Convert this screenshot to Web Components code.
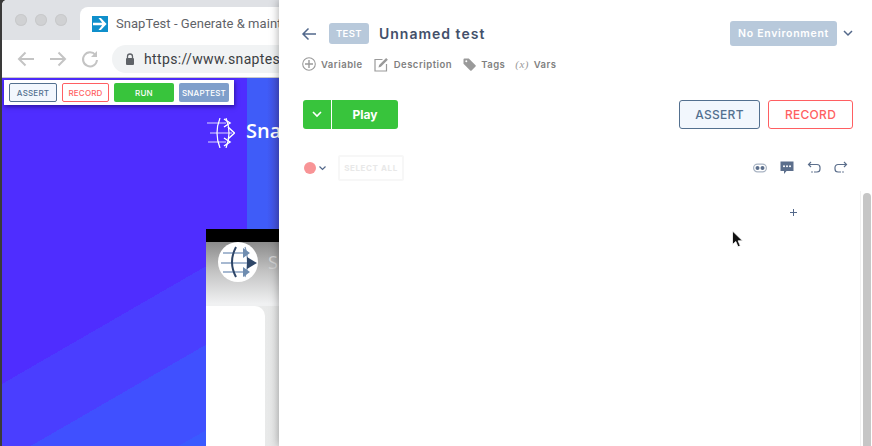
<!DOCTYPE html>
<html>
<head>
<meta charset="utf-8">
<title>SnapTest</title>
<style>
  html, body { margin: 0; height: 100%; overflow: hidden; background: #3a3a3a; }
  body { font-family: Inter, "Liberation Sans", sans-serif; }
</style>
</head>
<body>
<snap-app>
  <browser-window slot="left"></browser-window>
  <test-panel slot="right"></test-panel>
</snap-app>

<script>
function component(name, html) {
  const template = document.createElement('template');
  template.innerHTML = html;
  customElements.define(name, class extends HTMLElement {
    constructor() {
      super();
      this.attachShadow({ mode: 'open' });
      this.shadowRoot.appendChild(template.content.cloneNode(true));
    }
  });
}

component('snap-app', `
  <style>
    :host { display: flex; width: 872px; height: 446px; overflow: hidden; }
    .left { display: block; width: 279px; height: 100%; flex: none; padding-left: 2px; box-sizing: border-box; }
    .right { display: block; flex: 1; height: 100%; position: relative; z-index: 2; box-shadow: 0 0 9px rgba(0,0,0,.35); }
  </style>
  <div class="left"><slot name="left"></slot></div>
  <div class="right"><slot name="right"></slot></div>
`);

component('browser-window', `
  <style>
    :host { display: flex; flex-direction: column; height: 100%; overflow: hidden; border-top-left-radius: 5px; background: #fff; }
    site-page { flex: 1; min-height: 0; }
  </style>
  <browser-tabs></browser-tabs>
  <browser-bar></browser-bar>
  <site-page></site-page>
`);

component('browser-tabs', `
  <style>
    :host { display: flex; align-items: flex-end; height: 40px; background: #dfe1e5; padding-left: 13px; box-sizing: border-box; }
    .lights { display: flex; gap: 8px; align-self: center; margin-right: 13px; }
    .lights i { width: 12px; height: 12px; border-radius: 50%; background: #d0d1d3; box-shadow: inset 0 0 0 1px #c8c9cb; }
    .tab { flex: 1; height: 33px; background: #fff; border-radius: 8px 0 0 0; display: flex; align-items: center; padding-left: 12px; gap: 8px; white-space: nowrap; overflow: hidden; }
    .tab svg { flex: none; }
    .tab span { font: 13px Roboto, "Liberation Sans", sans-serif; letter-spacing: .05px; color: #5f6368; }
  </style>
  <div class="lights"><i></i><i></i><i></i></div>
  <div class="tab">
    <svg width="16" height="16" viewBox="0 0 16 16"><rect width="16" height="16" fill="#0f8fcb"/><path d="M1 6.800h9.200L6.500 2h2.400l5.700 6-5.700 6H6.500l3.700-4.800H1z" fill="#fff"/></svg>
    <span>SnapTest - Generate &amp; maint</span>
  </div>
`);

component('browser-bar', `
  <style>
    :host { display: flex; align-items: center; height: 38px; background: #fff; border-bottom: 1px solid #c9c9c9; box-sizing: border-box; padding-left: 14px; overflow: hidden; }
    svg.nav { flex: none; margin-right: 12px; }
    .url { flex: none; width: 260px; height: 28px; border-radius: 14px; background: #f1f3f4; display: flex; align-items: center; padding-left: 13px; margin-left: 2px; box-sizing: border-box; gap: 9px; }
    .url span { font: 14px Roboto, "Liberation Sans", sans-serif; letter-spacing: .35px; color: #3c4043; white-space: nowrap; }
  </style>
  <svg class="nav" width="20" height="20" viewBox="0 0 20 20" fill="none" stroke="#c4c4c4" stroke-width="2"><path d="M18 10H3M9.500 3.500 3 10l6.500 6.500"/></svg>
  <svg class="nav" width="20" height="20" viewBox="0 0 20 20" fill="none" stroke="#c4c4c4" stroke-width="2"><path d="M2 10h15M10.500 3.500 17 10l-6.500 6.500"/></svg>
  <svg class="nav" style="margin-right:10px" width="20" height="20" viewBox="0 0 20 20" fill="none"><path d="M15.500 6A7 7 0 1 0 17 11" stroke="#c4c4c4" stroke-width="2"/><path d="M17 2v6h-6z" fill="#c4c4c4"/></svg>
  <div class="url">
    <svg width="10" height="12" viewBox="0 0 10 12"><path d="M2.500 5V3.500a2.500 2.500 0 0 1 5 0V5" fill="none" stroke="#5f6368" stroke-width="1.300"/><rect x="1" y="5" width="8" height="7" rx="1" fill="#5f6368"/></svg>
    <span>https://www.snaptes</span>
  </div>
`);

component('site-page', `
  <style>
    :host {
      display: flex; flex-direction: column; position: relative; overflow: hidden;
      padding-left: 204px; box-sizing: border-box;
      background:
        linear-gradient(90deg, #3f5cf8 0, #3f5cf8 20px, #4650d8 32px) right top / 32px 151px no-repeat,
        linear-gradient(150deg, #4f2dff 0, #4f2dff 265px, #4a3eff 265px, #4a3eff 333px, #4050ff 333px, #4050ff 407px, #3a5aff 407px);
    }
    snap-toolbar { position: absolute; left: 2px; top: 2px; }
    site-brand { height: 151px; flex: none; }
    video-card { flex: 1; min-height: 0; }
  </style>
  <snap-toolbar></snap-toolbar>
  <site-brand></site-brand>
  <video-card></video-card>
`);

component('snap-toolbar', `
  <style>
    :host { display: flex; gap: 5px; background: #fff; padding: 3px 5px; width: 230px; height: 25px; box-sizing: border-box; box-shadow: 1px 2px 4px rgba(20,0,90,.55); }
    button { height: 19px; margin: 0; padding: 0; border-radius: 2px; box-sizing: border-box; font: 500 8px Inter, "Liberation Sans", sans-serif; letter-spacing: .2px; }
    .assert { width: 48px; background: #f2f7fd; border: 1px solid #53708f; color: #53708f; }
    .record { width: 47px; background: #fff; border: 1px solid #ff5f62; color: #ff5f62; }
    .run { width: 60px; background: #38c43c; border: 0; color: #fff; }
    .snap { width: 50px; background: #7f9fcb; border: 0; color: #fff; }
  </style>
  <button class="assert">ASSERT</button>
  <button class="record">RECORD</button>
  <button class="run">RUN</button>
  <button class="snap">SNAPTEST</button>
`);

component('site-brand', `
  <style>
    :host { display: flex; align-items: flex-start; padding-top: 40px; padding-left: 1px; box-sizing: border-box; white-space: nowrap; }
    svg { flex: none; width: 28px; height: 30px; }
    span { font: 600 20px "Open Sans", "Liberation Sans", sans-serif; color: #fff; margin-left: 11px; line-height: 26px; }
  </style>
  <svg viewBox="0 0 28 30" fill="none" stroke="#fff">
    <path d="M0 5h19M3 15h22M1 24h18" stroke-width="1.100" stroke-opacity=".8"/>
    <path d="M13 0Q7 15 13 30M19 0Q25 15 19 30" stroke-width="1.200"/>
    <path d="M17 1l6 4-6 4M21 9l6.500 6-6.500 6M17 20l6 4-6 4" stroke-width="1.500"/>
  </svg>
  <span>Snap</span>
`);

component('video-card', `
  <style>
    :host { display: flex; flex-direction: column; overflow: hidden; background: #fff; }
    .bar { height: 13px; background: #000; flex: none; }
    .head { height: 64px; flex: none; box-sizing: border-box; padding: 0 0 0 12px; background: linear-gradient(#8b8b8b, #c2c2c2 45%, #f0f1f2 96%); display: flex; white-space: nowrap; }
    .logo { width: 40px; height: 40px; border-radius: 50%; background: #fff; display: flex; align-items: center; justify-content: flex-end; flex: none; }
    .logo svg { width: 37px; height: 36px; }
    .name { font: 18px "Open Sans", "Liberation Sans", sans-serif; color: #d2d2d2; margin-left: 10px; line-height: 40px; }
    .body { flex: 1; background: linear-gradient(90deg, #f4f5f5, #e6e7e7); display: flex; }
    .sheet { width: 59px; background: #fff; border-top-right-radius: 10px; }
  </style>
  <div class="bar"></div>
  <div class="head">
    <div class="logo">
      <svg viewBox="0 0 37 36" fill="none">
        <path d="M2 9h24M0 19h30M2 28h24" stroke="#8aa3c2" stroke-width="1.500"/>
        <path d="M15 3Q7 18 15 33" stroke="#2e4668" stroke-width="2"/>
        <path d="M24 3Q29 18 24 33" stroke="#7d97b8" stroke-width="1.200"/>
        <path d="M22 4l7 5-7 5zM22 23l7 5-7 5z" fill="#6f8db0"/>
        <path d="M26 13l10 6-10 6z" fill="#2e4668"/>
      </svg>
    </div>
    <span class="name">S</span>
  </div>
  <div class="body"><div class="sheet"></div></div>
`);

component('test-panel', `
  <style>
    :host { display: flex; flex-direction: column; height: 100%; background: #fff; position: relative; font-family: Inter, "Liberation Sans", sans-serif; }
    .cursor { position: absolute; left: 452px; top: 230px; }
    step-area { flex: 1; min-height: 0; }
  </style>
  <panel-header></panel-header>
  <meta-row></meta-row>
  <action-row></action-row>
  <step-toolbar></step-toolbar>
  <step-area></step-area>
  <svg class="cursor" width="13" height="19" viewBox="0 0 13 19"><path d="M1.500 1v13.500l3.300-3 2.200 5.300 2.300-1-2.200-5h4.400z" fill="#111" stroke="#fff" stroke-width=".8"/></svg>
`);

component('panel-header', `
  <style>
    :host { display: flex; align-items: center; height: 25px; margin-top: 21px; padding: 0 19px 0 22px; }
    .back { flex: none; margin-right: 12px; }
    .badge { width: 40px; height: 21px; border-radius: 3px; background: #b8c9db; color: #fff; font: 600 9.500px Inter, "Liberation Sans", sans-serif; letter-spacing: .4px; display: flex; align-items: center; justify-content: center; }
    .title { font: 600 14px Inter, "Liberation Sans", sans-serif; letter-spacing: 1px; color: #43506a; margin-left: 10px; flex: 1; }
    .env { width: 107px; height: 25px; border-radius: 3px; background: #b8c9db; color: #fff; font: 600 10.500px Inter, "Liberation Sans", sans-serif; letter-spacing: .7px; display: flex; align-items: center; justify-content: center; white-space: nowrap; }
    .chev { margin-left: 6px; flex: none; }
  </style>
  <svg class="back" width="16" height="14" viewBox="0 0 16 14" fill="none" stroke="#52688c" stroke-width="1.500"><path d="M15 7H2M7.500 1.500 2 7l5.500 5.500"/></svg>
  <div class="badge">TEST</div>
  <div class="title">Unnamed test</div>
  <div class="env">No Environment</div>
  <svg class="chev" width="10" height="7" viewBox="0 0 10 7" fill="none" stroke="#53688a" stroke-width="1.500"><path d="M1 1l4 4 4-4"/></svg>
`);

component('meta-link', `
  <style>
    :host { display: inline-flex; align-items: center; gap: 5px; font: 600 9.500px Inter, "Liberation Sans", sans-serif; letter-spacing: .5px; color: #7f7f7f; white-space: nowrap; }
  </style>
  <slot name="icon"></slot><slot></slot>
`);

component('meta-row', `
  <style>
    :host { display: flex; align-items: center; height: 16px; margin-top: 10px; padding-left: 23px; gap: 11px; }
    .vars { font: italic 11px "Liberation Serif", serif; color: #999; letter-spacing: .4px; margin-left: -1px; }
  </style>
  <meta-link><svg slot="icon" width="14" height="14" viewBox="0 0 14 14" fill="none" stroke="#9a9a9a" stroke-width="1.100"><circle cx="7" cy="7" r="6.300"/><path d="M7 3v8M3 7h8" stroke-width="1.400"/></svg>Variable</meta-link>
  <meta-link><svg slot="icon" width="15" height="15" viewBox="0 0 15 15" fill="none" stroke="#9a9a9a" stroke-width="1.200"><path d="M8.500 2.500H1v11.500h11.500V7"/><path d="M4.500 10.500l.6-2.500 7-7 1.800 1.800-7 7z" fill="#9a9a9a" stroke="none"/></svg>Description</meta-link>
  <meta-link><svg slot="icon" width="13" height="13" viewBox="0 0 13 13"><path d="M.5 1.500a1 1 0 0 1 1-1h4.300l6.700 6.700a1 1 0 0 1 0 1.400l-3.900 3.900a1 1 0 0 1-1.400 0L.5 5.800z" fill="#9a9a9a"/><circle cx="3.300" cy="3.300" r="1" fill="#fff"/></svg>Tags</meta-link>
  <meta-link><span slot="icon" class="vars">(x)</span>Vars</meta-link>
`);

component('action-row', `
  <style>
    :host { display: flex; align-items: center; height: 29px; margin-top: 28px; padding: 0 19px 0 24px; }
    .play { display: flex; width: 95px; height: 29px; border-radius: 3px; overflow: hidden; background: #38c43c; color: #fff; font: 700 12px Inter, "Liberation Sans", sans-serif; }
    .drop { width: 28px; display: flex; align-items: center; justify-content: center; border-right: 1px solid #fff; }
    .label { flex: 1; display: flex; align-items: center; justify-content: center; }
    .spacer { flex: 1; }
    button { height: 29px; padding: 0; box-sizing: border-box; border-radius: 3px; font: 500 12px Inter, "Liberation Sans", sans-serif; letter-spacing: .3px; }
    .assert { width: 81px; background: #f2f7fd; border: 1px solid #53708f; color: #53708f; margin-right: 8px; }
    .record { width: 85px; background: #fff; border: 1px solid #ff5f62; color: #ff5f62; }
  </style>
  <div class="play">
    <div class="drop"><svg width="10" height="7" viewBox="0 0 10 7" fill="none" stroke="#fff" stroke-width="1.600"><path d="M1 1l4 4 4-4"/></svg></div>
    <div class="label">Play</div>
  </div>
  <div class="spacer"></div>
  <button class="assert">ASSERT</button>
  <button class="record">RECORD</button>
`);

component('step-toolbar', `
  <style>
    :host { display: flex; align-items: center; height: 26px; margin-top: 26px; padding: 0 24px 0 25px; }
    .dot { width: 12px; height: 12px; border-radius: 50%; background: #f89496; flex: none; }
    .chev { margin: 0 12px 0 3px; flex: none; }
    .select { width: 66px; height: 26px; border: 2px solid #f7f7f7; box-sizing: border-box; border-radius: 2px; color: #e8e8e8; font: 700 8px Inter, "Liberation Sans", sans-serif; letter-spacing: .6px; display: flex; align-items: center; justify-content: center; white-space: nowrap; }
    .spacer { flex: 1; }
    .icons { display: flex; gap: 13px; align-items: center; }
    .icons svg { display: block; }
  </style>
  <div class="dot"></div>
  <svg class="chev" width="7" height="5" viewBox="0 0 7 5" fill="none" stroke="#53688a" stroke-width="1.200"><path d="M.5.5l3 3 3-3"/></svg>
  <div class="select">SELECT ALL</div>
  <div class="spacer"></div>
  <div class="icons">
    <svg width="14" height="14" viewBox="0 0 14 14"><rect x=".6" y="3.100" width="12.800" height="7.800" rx="3.900" fill="none" stroke="#a9b4c3" stroke-width="1.200"/><circle cx="4.500" cy="7" r="2" fill="#5c6f8c"/><circle cx="9.500" cy="7" r="2" fill="#5c6f8c"/></svg>
    <svg width="14" height="14" viewBox="0 0 14 14"><path d="M.5.500h13v9.500H6.500L4 13v-3H.5z" fill="#5c6f8c"/><circle cx="4" cy="5.200" r="1" fill="#fff"/><circle cx="7" cy="5.200" r="1" fill="#fff"/><circle cx="10" cy="5.200" r="1" fill="#fff"/></svg>
    <svg width="14" height="14" viewBox="0 0 14 14" fill="none" stroke="#5c6f8c" stroke-width="1.200"><path d="M4 1 1.500 3.500 4 6"/><path d="M1.500 3.500H10a3 3 0 0 1 3 3v1.500a3 3 0 0 1-3 3H7"/><circle cx="5" cy="11" r=".8" fill="#5c6f8c" stroke="none"/></svg>
    <svg width="14" height="14" viewBox="0 0 14 14" fill="none" stroke="#5c6f8c" stroke-width="1.200"><path d="M10 1l2.500 2.500L10 6"/><path d="M12.500 3.500H4a3 3 0 0 0-3 3v1.500a3 3 0 0 0 3 3h3"/><circle cx="9" cy="11" r=".8" fill="#5c6f8c" stroke="none"/></svg>
  </div>
`);

component('step-area', `
  <style>
    :host { display: flex; margin-top: 10px; }
    .list { flex: 1; padding: 18px 0 0 511px; box-sizing: border-box; }
    .plus { display: block; width: 7px; height: 7px; }
    .track { width: 12px; flex: none; border-left: 1px solid #f0f0f0; box-sizing: border-box; padding: 2px 1px 0 2px; }
    .thumb { height: 100%; background: #c6c6c6; border-radius: 5px 5px 0 0; width: 8px; }
  </style>
  <div class="list"><svg class="plus" viewBox="0 0 7 7" stroke="#53688a" stroke-width="1"><path d="M3.500 0v7M0 3.500h7"/></svg></div>
  <div class="track"><div class="thumb"></div></div>
`);
</script>
</body>
</html>
